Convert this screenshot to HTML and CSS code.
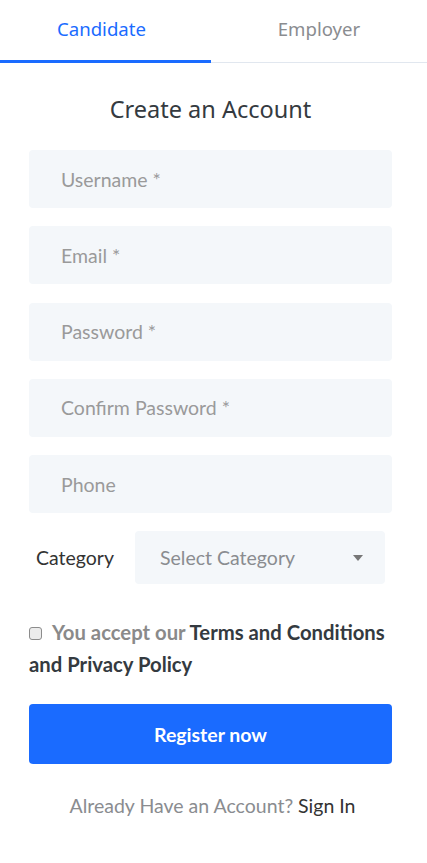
FILE: index.html
```html
<!DOCTYPE html>
<html>
<head>
<meta charset="utf-8">
<link rel="stylesheet" href="styles.css">
</head>
<body>
<div class="page">
  <div class="tabs">
    <div class="tab active">Candidate</div>
    <div class="tab">Employer</div>
  </div>
  <form class="form">
    <h1 class="title">Create an Account</h1>
    <input class="field" type="text" placeholder="Username *">
    <input class="field" type="email" placeholder="Email *">
    <input class="field" type="password" placeholder="Password *">
    <input class="field" type="password" placeholder="Confirm Password *">
    <input class="field" type="text" placeholder="Phone">
    <div class="cat-row">
      <label class="cat-label">Category</label>
      <div class="select">
        <span>Select Category</span>
        <span class="caret"></span>
      </div>
    </div>
    <div class="terms">
      <span class="checkbox"></span><span class="muted">You accept our</span> Terms and Conditions and Privacy Policy
    </div>
    <button class="btn" type="button">Register now</button>
    <p class="signin"><span class="muted-light">Already Have an Account?</span> Sign In</p>
  </form>
</div>
</body>
</html>
```

FILE: styles.css
```css
* { box-sizing: border-box; }
html, body { margin: 0; padding: 0; background: #fff; }
body { font-family: "Lato", sans-serif; color: #333; }
.page { width: 427px; }
.tabs { display: flex; height: 63px; }
.tab {
  flex: 1;
  display: flex;
  align-items: center;
  justify-content: center;
  padding-bottom: 6px;
  font-size: 18.6px;
  color: #8a8c90;
  border-bottom: 1px solid #e1e7ef;
  font-family: "Noto Sans", sans-serif;
}
.tab.active { color: #1a6bff; border-bottom: 3px solid #1a6bff; padding: 0 8px 4px 0; flex: 0 0 211px; }
.form { padding: 0 35px 0 29px; display: flex; flex-direction: column; }
.title {
  margin: 31px 0 26px;
  text-align: center;
  font-family: "Noto Sans", sans-serif;
  font-weight: 400;
  font-size: 23.5px;
  color: #343a40;
  line-height: 30px;
}
.field {
  display: block;
  width: 363px;
  height: 58px;
  border: 0;
  border-radius: 4px;
  background: #f4f7fa;
  margin: 0 0 18.3px;
  padding: 0 32px;
  font-family: "Lato", sans-serif;
  font-size: 19.5px;
  outline: none;
}
.field::placeholder { color: #9a9a9a; }
.cat-row { display: flex; align-items: center; padding-left: 7px; }
.cat-label { font-size: 19.5px; color: #333; width: 99px; }
.select {
  width: 250px;
  height: 53px;
  background: #f4f7fa;
  border-radius: 4px;
  display: flex;
  align-items: center;
  justify-content: space-between;
  padding: 0 22px 0 25px;
  font-size: 19.5px;
  color: #8a8c90;
}
.caret { width: 0; height: 0; border-left: 5px solid transparent; border-right: 5px solid transparent; border-top: 6px solid #777; }
.terms {
  margin-top: 32px;
  font-weight: 700;
  font-size: 20.3px;
  line-height: 32px;
  color: #343a40;
}
.checkbox {
  display: inline-block;
  width: 13px; height: 13px;
  border: 1px solid #8c8c8c;
  border-radius: 3px;
  background: #ececec;
  vertical-align: 0px;
  margin-right: 10px;
}
.muted { color: #8a8a8a; }
.btn {
  margin-top: 24px;
  width: 363px;
  height: 60px;
  border: 0;
  border-radius: 4px;
  background: #1a6bff;
  color: #fff;
  font-family: "Lato", sans-serif;
  font-weight: 700;
  font-size: 19.5px;
}
.signin {
  margin: 29px 0 0;
  line-height: 26px;
  text-align: center;
  font-size: 19.5px;
  color: #333;
  padding-left: 4px;
}
.muted-light { color: #8a8c90; }
```
